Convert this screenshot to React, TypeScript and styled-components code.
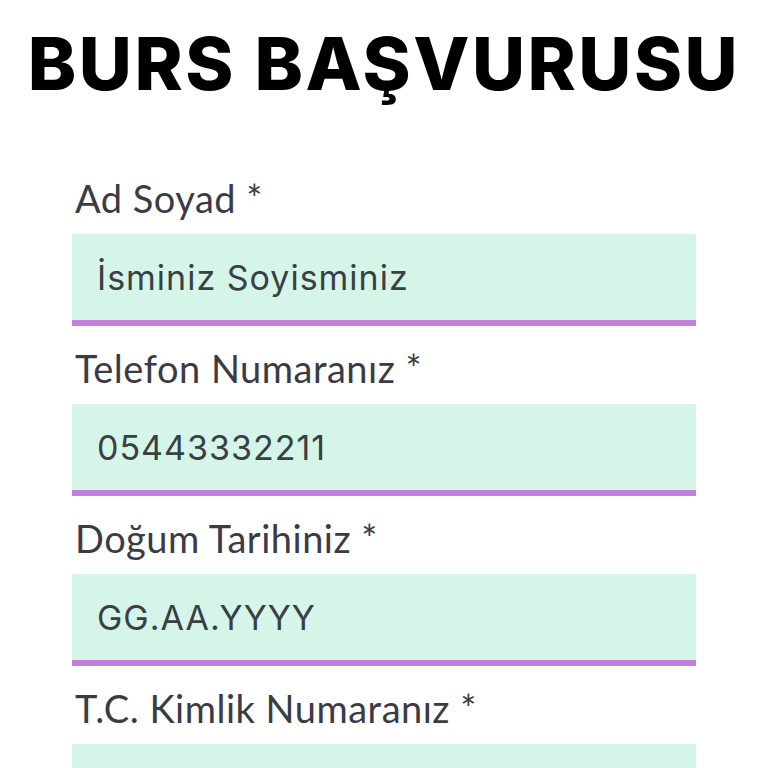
import styled, { createGlobalStyle } from 'styled-components';

const GlobalStyle = createGlobalStyle`
  body {
    margin: 0;
    background: #ffffff;
    font-family: 'Lato', 'Liberation Sans', sans-serif;
  }
`;

const Page = styled.div`
  width: 768px;
  height: 768px;
  overflow: hidden;
  background: #ffffff;
`;

const Title = styled.h1`
  margin: 0;
  padding-top: 22px;
  height: 118px;
  box-sizing: border-box;
  text-align: center;
  font-family: 'Inter', 'Liberation Sans', sans-serif;
  font-weight: 800;
  font-size: 73px;
  line-height: 84px;
  letter-spacing: 2.5px;
  color: #000000;
`;

const Form = styled.form`
  display: flex;
  flex-direction: column;
  padding: 38px 72px 0;
`;

const Field = styled.div`
  display: flex;
  flex-direction: column;
`;

const Label = styled.label`
  display: flex;
  align-items: center;
  box-sizing: border-box;
  height: 78px;
  padding: 5px 0 0 3px;
  font-family: 'Lato', 'Liberation Sans', sans-serif;
  font-weight: 400;
  font-size: 38px;
  letter-spacing: 0.5px;
  color: #3b3b45;
`;

const Input = styled.input`
  box-sizing: border-box;
  width: 624px;
  height: 92px;
  border: none;
  border-bottom: 6px solid #c27fdc;
  background: #d6f5e9;
  padding: 0 25px;
  font-family: 'Inter', 'Open Sans', sans-serif;
  font-size: 34px;
  letter-spacing: 1px;
  color: #3a3f44;
  outline: none;
  &::placeholder {
    color: #3a3f44;
    opacity: 1;
  }
`;

const fields = [
  { label: 'Ad Soyad *', placeholder: 'İsminiz Soyisminiz' },
  { label: 'Telefon Numaranız *', placeholder: '05443332211' },
  { label: 'Doğum Tarihiniz *', placeholder: 'GG.AA.YYYY' },
  { label: 'T.C. Kimlik Numaranız *', placeholder: '' },
];

export default function App() {
  return (
    <Page>
      <GlobalStyle />
      <Title>BURS BAŞVURUSU</Title>
      <Form>
        {fields.map((f) => (
          <Field key={f.label}>
            <Label>{f.label}</Label>
            <Input placeholder={f.placeholder} />
          </Field>
        ))}
      </Form>
    </Page>
  );
}
